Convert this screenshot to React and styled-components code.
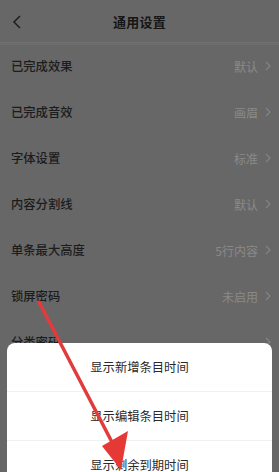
import React from 'react';
import styled, { createGlobalStyle } from 'styled-components';

const Global = createGlobalStyle`
  html, body { margin: 0; padding: 0; }
  body {
    width: 279px;
    height: 472px;
    overflow: hidden;
    font-family: "Noto Sans CJK SC", "Noto Sans", sans-serif;
  }
`;

const Screen = styled.div`
  position: relative;
  width: 279px;
  height: 472px;
  overflow: hidden;
  background: #676767;
`;

const Header = styled.div`
  height: 42px;
  display: flex;
  align-items: center;
  justify-content: center;
  position: relative;
  border-bottom: 1px solid #717171;
  box-shadow: 0 2px 0 #6d6d6d;
`;

const Back = styled.svg`
  position: absolute;
  left: 12px;
  top: 15px;
`;

const Title = styled.div`
  font-size: 13px;
  font-weight: 700;
  color: #161616;
  letter-spacing: 0.3px;
`;

const List = styled.div`
  display: flex;
  flex-direction: column;
`;

const Row = styled.div`
  height: 46px;
  display: flex;
  align-items: center;
  justify-content: space-between;
  padding: 0 8px 0 11px;
`;

const Label = styled.span`
  font-size: 12.3px;
  font-weight: 500;
  color: #1c1c1c;
`;

const Value = styled.span`
  display: flex;
  align-items: center;
  gap: 7px;
  font-size: 12px;
  color: #8a8a8a;
`;

const Sheet = styled.div`
  position: absolute;
  left: 7px;
  right: 7px;
  top: 343px;
  background: #fff;
  border-radius: 8px 8px 0 0;
  display: flex;
  flex-direction: column;
`;

const SheetItem = styled.div`
  height: 48px;
  display: flex;
  align-items: center;
  justify-content: center;
  font-size: 12.3px;
  color: #2a2a2a;
  border-top: ${p => (p.$first ? 'none' : '1px solid #f0f0f0')};
`;

const Arrow = styled.svg`
  position: absolute;
  left: 0;
  top: 0;
  pointer-events: none;
`;

const Chevron = () => (
  <svg width="6" height="10" viewBox="0 0 6 10">
    <path d="M1 1l4 4-4 4" fill="none" stroke="#858585" strokeWidth="1.1" />
  </svg>
);

const rows = [
  ['已完成效果', '默认'],
  ['已完成音效', '画眉'],
  ['字体设置', '标准'],
  ['内容分割线', '默认'],
  ['单条最大高度', '5行内容'],
  ['锁屏密码', '未启用'],
  ['分类密码', ''],
];

const options = ['显示新增条目时间', '显示编辑条目时间', '显示剩余到期时间'];

export default function App() {
  return (
    <Screen>
      <Global />
      <Header>
        <Back width="10" height="14" viewBox="0 0 10 14">
          <path d="M8 1L2 7l6 6" fill="none" stroke="#1e1e1e" strokeWidth="1.5" />
        </Back>
        <Title>通用设置</Title>
      </Header>
      <List>
        {rows.map(([label, value]) => (
          <Row key={label}>
            <Label>{label}</Label>
            <Value>
              {value}
              <Chevron />
            </Value>
          </Row>
        ))}
      </List>
      <Sheet>
        {options.map((o, i) => (
          <SheetItem key={o} $first={i === 0}>{o}</SheetItem>
        ))}
      </Sheet>
      <Arrow width="279" height="472" viewBox="0 0 279 472">
        <line x1="39" y1="302" x2="114" y2="446" stroke="#e23b3b" strokeWidth="3.5" strokeLinecap="round" />
        <polygon points="102,446 128,431 121,470" fill="#e53935" />
      </Arrow>
    </Screen>
  );
}
